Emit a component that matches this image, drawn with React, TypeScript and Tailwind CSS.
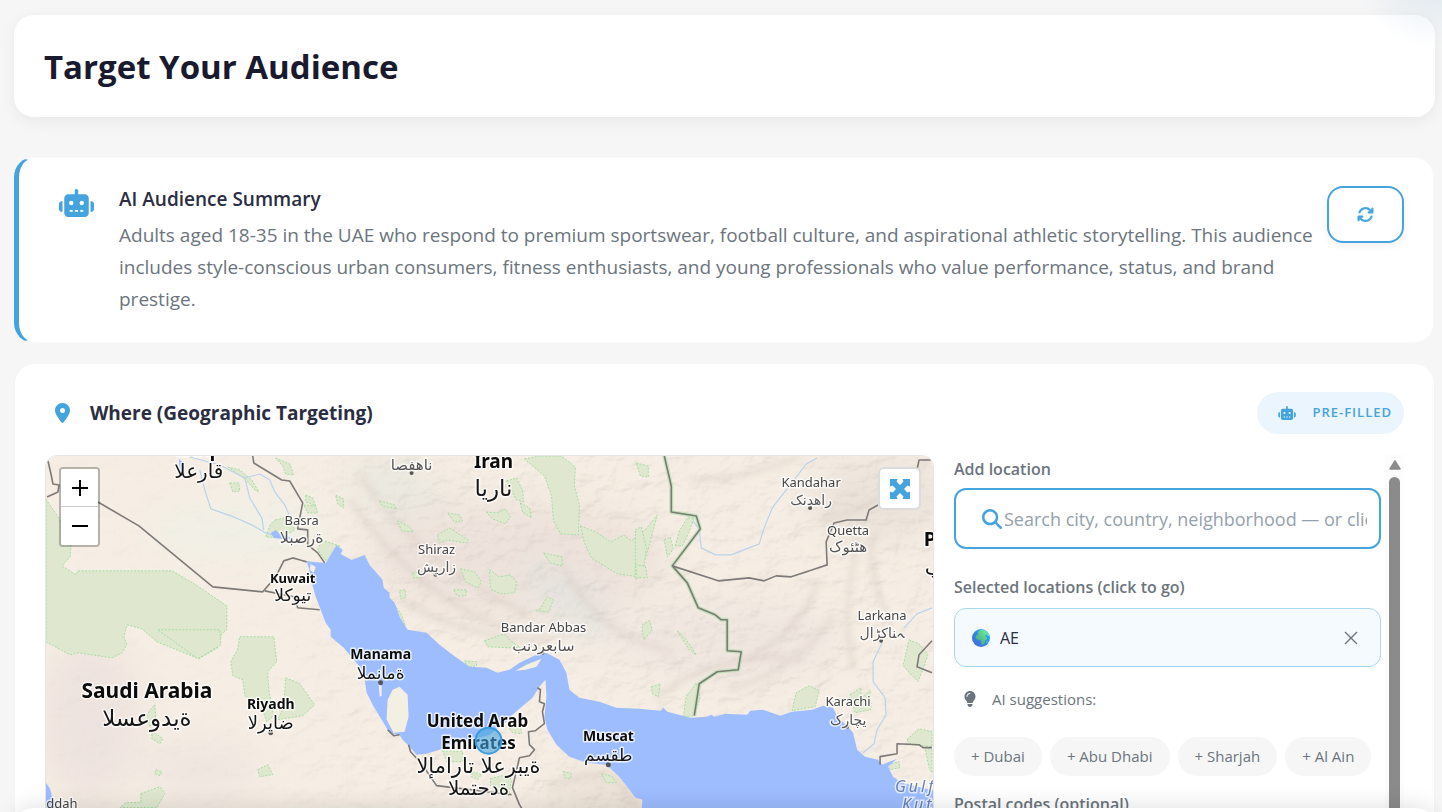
import React, { useState } from "react";
import {
  FaArrowsRotate,
  FaLightbulb,
  FaLocationDot,
  FaMagnifyingGlass,
  FaMaximize,
  FaRobot,
} from "react-icons/fa6";

const suggestions = ["Dubai", "Abu Dhabi", "Sharjah", "Al Ain"];

const parks = [
  "46,499 58,517 66,531 71,546 70,557 62,566 76,575 78,571 172,571 196,585 227,606 227,630 222,634 218,648 199,659 157,642 142,629 127,625 124,637 127,645 122,653 112,658 78,653 70,655 46,642",
  "240,637 274,637 277,662 268,672 269,690 274,716 267,722 261,705 245,696 243,680 233,676 231,662 238,649",
  "286,678 300,684 315,705 303,716 278,720 284,707",
  "525,459 540,456 562,456 576,467 575,486 580,505 579,535 561,534 554,520 552,495 545,476",
  "581,526 596,532 612,542 624,535 632,541 645,531 658,515 650,545 640,577 618,574 592,558 585,543",
  "461,569 475,572 482,582 478,588 466,582",
  "490,570 500,577 511,575 517,582 515,593 501,594 491,589",
  "438,535 450,528 456,532 469,540 467,543 448,540 440,543",
  "487,512 497,513 506,509 511,517 506,524 493,519",
  "448,513 460,515 463,521 455,522",
  "380,501 395,505 397,509 383,506",
  "398,521 410,527 414,532 402,531",
  "544,553 562,557 563,566 551,563",
  "540,610 548,597 554,600 549,612 537,611",
  "507,481 517,478 523,490 524,502 517,500",
  "521,503 530,508 532,518 523,512",
  "636,530 642,527 647,548 644,575 636,580",
  "636,565 646,566 648,578 638,578",
  "676,546 680,531 688,518 695,518 688,536 683,546",
  "665,540 671,537 674,549 668,557",
  "228,467 240,470 252,480 259,492 255,490 245,479",
  "276,458 290,464 294,475 286,474 283,466",
  "276,520 289,517 295,530 282,538 266,537 271,524",
  "304,505 316,506 318,513 308,513",
  "306,495 313,498 316,506 306,502",
  "322,540 340,546 335,560 325,560 318,550",
  "230,483 239,483 240,491 233,492",
  "336,495 344,499 344,508 338,504",
  "485,641 505,634 511,641 521,648 510,648 488,647",
  "465,661 477,662 477,666 468,667",
  "793,711 797,693 810,686 820,691 816,707",
  "684,717 687,697 697,683 701,698 695,716",
  "652,687 661,684 659,697 653,694",
  "910,640 920,644 929,655 919,682 904,666",
  "851,695 862,688 862,699 871,690 872,710 856,713",
  "908,740 920,729 933,732 933,747 912,745",
  "926,748 933,750 933,773 930,768",
  "889,765 900,762 901,768 891,770",
  "141,794 160,787 165,794 157,808 120,808 126,803 141,803",
  "258,770 268,765 273,775 260,777",
  "156,770 162,772 160,776 155,774",
  "150,710 155,705 156,719 150,727 147,718",
  "152,731 163,739 160,744 152,739",
  "158,630 220,630 221,645 198,659",
  "443,751 463,752 463,762 447,762",
  "473,772 482,775 478,780 472,777",
  "510,729 521,726 522,734 513,733",
  "491,779 507,775 512,780 509,796 491,786",
  "602,774 613,777 617,783 607,783",
  "564,772 572,774 571,779 565,778",
  "395,605 402,615 406,626 401,624",
  "400,591 406,590 406,598 401,599",
  "454,590 467,590 466,596 458,596",
  "413,573 422,572 421,578 414,578",
  "678,631 687,640 697,655 690,650",
  "643,625 650,621 653,630 645,640 643,632",
  "637,463 649,466 649,477 641,476",
];

const sea =
  "337,545 343,550 341,554 352,560 365,555 370,565 383,580 384,588 390,593 390,598 395,603 400,617 408,630 427,633 440,645 453,655 470,667 487,668 498,673 510,670 520,663 537,655 547,653 560,660 567,673 570,690 580,698 600,702 617,708 640,709 661,711 664,708 668,712 691,718 708,717 712,715 715,717 726,714 748,715 751,711 764,710 781,716 793,712 813,710 824,706 834,708 838,717 849,727 854,733 858,750 866,757 879,760 883,765 898,759 889,767 894,777 903,783 934,791 934,880 650,880 640,850 643,800 636,798 630,790 620,777 607,765 587,763 570,757 557,745 548,730 545,717 547,697 546,680 540,687 533,698 513,715 505,724 490,735 470,741 453,744 440,750 427,754 417,755 410,747 403,740 400,735 390,733 382,720 373,705 367,693 365,680 360,667 344,648 331,637 331,630 326,623 321,610 316,597 312,583 309,568 307,561 314,562 326,563";

const borders = [
  "48,461 51,474 53,484 59,485 58,492 47,497",
  "98,502 139,526 213,587 263,592 276,577 284,561 293,558 307,562",
  "265,591 294,597 298,608 320,610",
  "253,456 254,463 282,480 290,481 303,503 299,523 298,529 308,530 308,545 318,553 325,563",
  "665,456 672,486 672,512 697,516 701,529 673,566 688,583 699,608 716,615 722,620 728,620 728,651 742,652 739,670 718,672 700,684 695,716",
  "673,566 719,581 750,578 765,581 777,576 792,577 828,565 827,542 835,523 848,520 867,520 870,510 879,505",
  "918,470 920,460 933,460",
  "933,641 920,655 918,667 933,673",
  "881,765 881,757 898,754 898,744 920,745 924,748 933,748",
  "538,688 541,690 540,702 545,704 543,712 545,724 536,731 529,732 530,745 535,750 530,756 520,758 513,788 520,805 535,830",
  "409,745 411,752 422,764 437,786 512,795",
  "388,730 394,736 400,735",
];

const rivers = [
  "200,470 205,490 211,509 234,517 252,525 266,533 280,537",
  "190,457 220,465 245,478 250,498 262,518 264,530",
  "245,478 260,474 270,480 275,492 285,505 294,525",
  "694,521 700,530 702,548 716,555 732,555 760,544 765,528 773,508 795,480 807,464 818,458",
  "883,643 874,662 874,682 886,698 887,715 878,730 875,744 864,753",
  "933,608 918,614 905,628",
];

const ridges = [
  "M360 475q60 90 170 140",
  "M350 500q70 100 160 130",
  "M400 600q70 40 150 40",
  "M560 560q40 80 110 90",
  "M700 670q90-10 120-90",
  "M730 690q70-20 105-75",
  "M655 700q60-50 150-40",
  "M860 540q-20 70-5 130",
  "M880 530q-20 20 10 90",
  "M690 480q60 0 110-24",
  "M820 520q60-10 112-60",
  "M550 790q70-40 90 30",
];

// x, y, size, weight, latin label
const places: [number, number, number, number, string][] = [
  [494, 468, 19, 700, "Iran"],
  [302, 525, 13, 400, "Basra"],
  [437, 554, 13, 400, "Shiraz"],
  [293, 583, 13, 700, "Kuwait"],
  [544, 632, 13, 400, "Bandar Abbas"],
  [812, 487, 13, 400, "Kandahar"],
  [849, 535, 13, 400, "Quetta"],
  [883, 620, 13, 400, "Larkana"],
  [381, 659, 14, 700, "Manama"],
  [147, 698, 21, 700, "Saudi Arabia"],
  [271, 709, 14, 700, "Riyadh"],
  [478, 727, 17, 700, "United Arab"],
  [479, 749, 17, 700, "Emirates"],
  [609, 741, 14, 700, "Muscat"],
  [849, 706, 13, 400, "Karachi"],
  [62, 808, 13, 400, "ddah"],
  [196, 456, 19, 700, "Iraq"],
  [968, 546, 20, 700, "Pakistan"],
];

// native names, drawn left to right
const nativePlaces: [number, number, number, string][] = [
  [199, 478, 20, "العراق"],
  [412, 470, 15, "اصفهان"],
  [494, 496, 23, "ایران"],
  [302, 543, 16, "البصرة"],
  [437, 572, 14, "شیراز"],
  [293, 601, 17, "الكويت"],
  [544, 651, 15, "بندرعباس"],
  [812, 505, 14, "کندهار"],
  [849, 552, 15, "کوئٹه"],
  [883, 638, 14, "لاڑکانہ"],
  [381, 679, 17, "المنامة"],
  [147, 726, 23, "السعودية"],
  [271, 729, 18, "الرياض"],
  [479, 773, 21, "الإمارات العربية"],
  [479, 795, 20, "المتحدة"],
  [609, 761, 17, "مسقط"],
  [849, 725, 14, "کراچی"],
  [836, 454, 20, "افغانستان"],
  [963, 575, 21, "پاکستان"],
];

const GulfMap = () => (
  <svg
    viewBox="46 456 888 424"
    preserveAspectRatio="xMidYMin slice"
    className="block h-full w-full"
    role="img"
    aria-label="Map of the Gulf region"
  >
    <defs>
      <filter id="relief" x="0" y="0" width="100%" height="100%">
        <feTurbulence type="fractalNoise" baseFrequency="0.04 0.06" numOctaves="4" seed="8" />
        <feDiffuseLighting surfaceScale="5" diffuseConstant="1.15" lightingColor="#ffffff">
          <feDistantLight azimuth="225" elevation="60" />
        </feDiffuseLighting>
      </filter>
      <linearGradient id="reliefFade">
        <stop offset="0.25" stopColor="#444444" />
        <stop offset="0.42" stopColor="#ffffff" />
      </linearGradient>
      <mask id="reliefMask">
        <rect x="46" y="456" width="888" height="424" fill="url(#reliefFade)" />
      </mask>
      <filter id="soft" x="-50%" y="-50%" width="200%" height="200%">
        <feGaussianBlur stdDeviation="16" />
      </filter>
      <filter id="softLine">
        <feGaussianBlur stdDeviation="3" />
      </filter>
    </defs>
    <rect x="46" y="456" width="888" height="424" fill="#f6eee4" />
    <g filter="url(#soft)">
      <ellipse cx="240" cy="530" rx="90" ry="25" fill="#f0f0e6" />
      <ellipse cx="420" cy="520" rx="40" ry="90" fill="#ebe8df" transform="rotate(-45 420 520)" />
      <ellipse cx="520" cy="560" rx="150" ry="60" fill="#eee3dc" />
      <ellipse cx="570" cy="600" rx="60" ry="20" fill="#e4e2de" transform="rotate(40 570 600)" />
      <ellipse cx="730" cy="640" rx="110" ry="40" fill="#f0e6e0" />
      <ellipse cx="880" cy="500" rx="70" ry="40" fill="#ebe3da" />
      <ellipse cx="90" cy="720" rx="50" ry="80" fill="#eee3de" />
      <ellipse cx="200" cy="770" rx="60" ry="30" fill="#efe6e0" />
      <ellipse cx="620" cy="790" rx="70" ry="20" fill="#ebe0d5" />
    </g>
    <g mask="url(#reliefMask)" className="mix-blend-multiply">
      <rect x="46" y="456" width="888" height="424" filter="url(#relief)" opacity="0.17" />
    </g>
    <g fill="none" stroke="#d9cdc5" strokeWidth="5" opacity="0.5" filter="url(#softLine)">
      {ridges.map((d) => (
        <path key={d} d={d} />
      ))}
    </g>
    <g fill="#dfe8cf" stroke="#a3dca0" strokeWidth="1" strokeDasharray="2 1.5">
      {parks.map((p) => (
        <polygon key={p} points={p} />
      ))}
    </g>
    <g fill="none" stroke="#b9d3ec" strokeWidth="1.2" strokeLinejoin="round">
      {rivers.map((p) => (
        <polyline key={p} points={p} />
      ))}
    </g>
    <g fill="#9ebdff">
      <polygon points={sea} />
      <polygon points="46,783 50,789 52,797 58,808 46,830" />
      <polygon points="271,533 276,530 280,534 288,536 294,539 283,539 274,538" />
      <polygon points="179,459 184,463 185,475 180,472" />
    </g>
    <g fill="#f4efe3">
      <polygon points="400,687 408,695 409,717 405,732 394,733 387,720 388,700 393,690" />
      <polygon points="379,684 382,686 382,696 380,697" />
      <polygon points="516,671 527,665 542,659 537,667 526,670" />
      <polygon points="311,564 316,567 314,573 310,570" />
      <polygon points="864,755 876,752 878,759 868,757" />
    </g>
    <polyline
      points={borders[4]}
      fill="none"
      stroke="#b9e0b2"
      strokeWidth="4"
      opacity="0.8"
      strokeLinejoin="round"
    />
    <g fill="none" stroke="#7d7a78" strokeWidth="1.6" strokeLinejoin="round">
      {borders.map((p) => (
        <polyline key={p} points={p} />
      ))}
    </g>
    <g fill="#555555">
      <circle cx="412" cy="473" r="2" />
      <circle cx="436" cy="575" r="2" />
      <circle cx="381" cy="683" r="2.5" />
      <circle cx="271" cy="733" r="2.5" />
      <circle cx="543" cy="653" r="2" />
      <circle cx="609" cy="765" r="2.5" />
      <circle cx="848" cy="727" r="2" />
      <circle cx="811" cy="508" r="2" />
      <circle cx="882" cy="641" r="2" />
    </g>
    <g
      textAnchor="middle"
      stroke="#ffffff"
      strokeOpacity="0.75"
      strokeWidth="3"
      strokeLinejoin="round"
      className="font-['Noto_Sans',sans-serif] [paint-order:stroke]"
    >
      {places.map(([x, y, size, weight, name]) => (
        <text
          key={name}
          x={x}
          y={y}
          fontSize={size}
          fontWeight={weight}
          fill={weight === 700 ? "#0c0c0c" : "#444444"}
        >
          {name}
        </text>
      ))}
    </g>
    <g
      textAnchor="middle"
      stroke="#ffffff"
      strokeOpacity="0.75"
      strokeWidth="3"
      strokeLinejoin="round"
      className="font-['DejaVu_Sans',sans-serif] [direction:ltr] [paint-order:stroke]"
    >
      {nativePlaces.map(([x, y, size, name]) => (
        <text
          key={name}
          x={x}
          y={y}
          fontSize={size}
          fill={size > 16 ? "#161616" : "#555555"}
          className="[unicode-bidi:bidi-override]"
        >
          {name}
        </text>
      ))}
    </g>
    <g
      fontSize="16"
      fontStyle="italic"
      letterSpacing="3"
      fill="#6680b5"
      stroke="#ffffff"
      strokeOpacity="0.7"
      strokeWidth="3"
      className="font-['Noto_Sans',sans-serif] [paint-order:stroke]"
    >
      <text x="896" y="792">Gulf of</text>
      <text x="903" y="810">Kutch</text>
    </g>
    <circle
      cx="489"
      cy="741"
      r="13"
      fill="#45a3de"
      fillOpacity="0.6"
      stroke="#3b9bdc"
      strokeWidth="2"
    />
  </svg>
);

const Globe = () => (
  <svg viewBox="0 0 18 18" className="h-[18px] w-[18px]" aria-hidden="true">
    <defs>
      <linearGradient id="ocean" x1="0" y1="1" x2="1" y2="0">
        <stop offset="0" stopColor="#4a5fd8" />
        <stop offset="0.55" stopColor="#2f8fe8" />
        <stop offset="1" stopColor="#2bc4fb" />
      </linearGradient>
      <linearGradient id="land" x1="0" y1="1" x2="1" y2="0">
        <stop offset="0" stopColor="#3f9a78" />
        <stop offset="1" stopColor="#74f7a8" />
      </linearGradient>
    </defs>
    <circle cx="9" cy="9" r="9" fill="url(#ocean)" />
    <path
      d="M6.300 2.300C8 .5 12 .5 14 2c1.600 1.200 2.900 2.900 3.400 4.900l-1.500.1-1.400-1.300-1.300.2.200 1.300 1.500 1.500-.2 1.600-1.800 1.300-.1 2-1.500 2.100-1.500.2-.9-2.500-.2-2.200-1.900-.3-2.500-.9-.8-1.900 1.200-2 1.600-.8-.4-1.500z"
      fill="url(#land)"
    />
    <path d="M14.800 11.600l1 .3-.8 2-.7-.5z" fill="#58d99a" />
  </svg>
);

const App = () => {
  const [search, setSearch] = useState("");
  const [locations, setLocations] = useState(["AE"]);

  const addLocation = (name: string) => {
    if (!locations.includes(name)) setLocations([...locations, name]);
  };

  return (
    <div className="relative h-screen overflow-hidden bg-[#f6f6f6] pt-[15px] pr-[7px] pl-3.5 font-['Open_Sans',sans-serif] text-[#2b2d42]">
      <header className="rounded-[20px] bg-white px-[30px] pt-[29px] pb-[27px] shadow-[0_4px_16px_rgba(0,0,0,0.06)]">
        <h1 className="text-[33px] leading-[46px] font-bold text-[#1a1a2e]">
          Target Your Audience
        </h1>
      </header>
      <div className="pointer-events-none absolute -top-28 -right-[72px] h-40 w-40 rounded-full bg-[radial-gradient(closest-side,rgba(69,140,190,0.16),transparent)]" />

      <section className="mt-10 mr-px flex items-start rounded-[20px] border border-l-[5px] border-[#f9f9f9] border-l-[#45a3de] bg-white pt-7 pr-[29px] pb-[27px] pl-10">
        <FaRobot className="mt-[3px] h-7 w-[35px] shrink-0 text-[#45a3de]" />
        <div className="ml-[25px] min-w-0 flex-1">
          <h2 className="text-[19px] leading-[26px] font-semibold">
            AI Audience Summary
          </h2>
          <p className="mt-[7px] text-[19px] leading-8 text-[#6c757d]">
            Adults aged 18-35 in the UAE who respond to premium sportswear,
            football culture, and aspirational athletic storytelling. This
            audience includes style-conscious urban consumers, fitness
            enthusiasts, and young professionals who value performance, status,
            and brand prestige.
          </p>
        </div>
        <button
          aria-label="Refresh summary"
          className="ml-2.5 flex h-[57px] w-[77px] shrink-0 items-center justify-center rounded-2xl border-2 border-[#45a3de] bg-white text-[#45a3de] shadow-[0_3px_8px_rgba(0,0,0,0.06)]"
        >
          <FaArrowsRotate className="h-[17px] w-[17px]" />
        </button>
      </section>

      <section className="mt-[21px] mr-px ml-px rounded-[20px] bg-white px-[30px] pt-7 pb-8 shadow-[0_1px_3px_rgba(0,0,0,0.03)]">
        <div className="flex items-center">
          <FaLocationDot className="ml-[10px] h-5 w-[15px] text-[#45a3de]" />
          <h2 className="ml-5 text-[19px] leading-7 font-bold">
            Where (Geographic Targeting)
          </h2>
          <span className="ml-auto flex h-[42px] items-center gap-4 rounded-full bg-[#ebf5fd] pr-3 pl-[21px] text-[13px] font-semibold tracking-[1px] text-[#45a3de]">
            <FaRobot className="h-[14px] w-[18px]" />
            PRE-FILLED
          </span>
        </div>

        <div className="mt-[21px] grid grid-cols-[minmax(0,1fr)_450px] gap-5">
          <div className="relative h-[424px] overflow-hidden rounded-xl border border-[#e6e6e6]">
            <GulfMap />
            <div className="absolute top-[11px] left-[13px] flex flex-col overflow-hidden rounded-sm border-2 border-black/25 bg-clip-padding">
              <button
                aria-label="Zoom in"
                className="flex h-[38px] w-[37px] items-center justify-center border-b border-[#cccccc] bg-white text-black"
              >
                <svg viewBox="0 0 16 16" className="h-4 w-4" aria-hidden="true">
                  <path d="M0 8h16M8 0v16" stroke="currentColor" strokeWidth="2" />
                </svg>
              </button>
              <button
                aria-label="Zoom out"
                className="flex h-[38px] w-[37px] items-center justify-center bg-white text-black"
              >
                <svg viewBox="0 0 16 16" className="h-4 w-4" aria-hidden="true">
                  <path d="M0 8h16" stroke="currentColor" strokeWidth="2" />
                </svg>
              </button>
            </div>
            <button
              aria-label="Fullscreen"
              className="absolute top-[11px] right-3 flex h-[43px] w-[43px] items-center justify-center rounded-md border-2 border-[#dcdcdc] bg-white text-[#45a3de]"
            >
              {/* four arrows to the corners, cut out of a solid square */}
              <svg viewBox="0 0 20 20" className="h-5 w-5" fill="currentColor" aria-hidden="true">
                <path d="M0 0h7.500L6.500 2.500 10 6l3.500-3.500L12.500 0H20v7.500l-2.500-1L14 10l3.500 3.500 2.500-1V20h-7.500l1-2.500L10 14l-3.500 3.500 1 2.500H0v-7.500l2.500 1L6 10 2.500 6.500 0 7.500z" />
              </svg>
            </button>
          </div>

          <div className="flex h-[424px] overflow-hidden">
            <div className="min-w-0 flex-1 text-[15px]">
              <label
                htmlFor="location"
                className="block text-base leading-7 font-semibold text-[#6c757d]"
              >
                Add location
              </label>
              <div className="mt-[5px] flex h-[61px] items-center rounded-xl border-2 border-[#45a3de] bg-white pr-3 pl-[26px]">
                <FaMagnifyingGlass className="h-5 w-5 shrink-0 text-[#45a3de]" />
                <input
                  id="location"
                  type="text"
                  value={search}
                  onChange={(e) => setSearch(e.target.value)}
                  placeholder="Search city, country, neighborhood — or click the map"
                  className="ml-0.5 w-full min-w-0 bg-transparent text-lg outline-none placeholder:text-[#95a1ac]"
                />
              </div>
              <h3 className="mt-6 text-base leading-7 font-semibold text-[#6c757d]">
                Selected locations (click to go)
              </h3>
              <ul className="mt-[7px] flex flex-col gap-2">
                {locations.map((name) => (
                  <li
                    key={name}
                    className="flex h-[59px] items-center rounded-xl border border-[#a9d6f3] bg-[#f4faff] pr-[22px] pl-[17px] text-base"
                  >
                    <Globe />
                    <span className="ml-2.5">{name}</span>
                    <button
                      aria-label={"Remove " + name}
                      onClick={() =>
                        setLocations(locations.filter((l) => l !== name))
                      }
                      className="ml-auto text-[#6c757d]"
                    >
                      <svg viewBox="0 0 14 14" className="h-3.5 w-3.5" aria-hidden="true">
                        <path
                          d="M1 1l12 12M13 1L1 13"
                          stroke="currentColor"
                          strokeWidth="1.4"
                        />
                      </svg>
                    </button>
                  </li>
                ))}
              </ul>
              <p className="mt-[18px] flex items-center leading-7 text-[#6c757d]">
                <FaLightbulb className="ml-[10px] h-4 w-3" />
                <span className="ml-4">AI suggestions:</span>
              </p>
              <div className="mt-6 flex gap-2">
                {suggestions.map((name) => (
                  <button
                    key={name}
                    onClick={() => addLocation(name)}
                    className="h-[39px] rounded-full bg-[#f6f6f6] px-[17px] whitespace-nowrap text-[#6c757d]"
                  >
                    + {name}
                  </button>
                ))}
              </div>
              <label
                htmlFor="postal"
                className="mt-[14px] block text-base leading-7 font-semibold text-[#6c757d]"
              >
                Postal codes (optional)
              </label>
              <input
                id="postal"
                type="text"
                className="mt-1 h-[61px] w-full rounded-xl border-2 border-[#e6e6e6] px-4"
              />
            </div>
            <div className="ml-1 flex w-[19px] flex-col items-center bg-[#fcfcfc] pt-[5px]">
              <svg viewBox="0 0 12 10" className="h-2.5 w-3" aria-hidden="true">
                <path
                  d="M6 1L11 9H1z"
                  fill="#8b8b8b"
                  stroke="#8b8b8b"
                  strokeWidth="1.5"
                  strokeLinejoin="round"
                />
              </svg>
              <div className="mt-[7px] w-[11px] flex-1 rounded-full bg-[#8b8b8b]" />
            </div>
          </div>
        </div>
      </section>

      <div className="fixed right-1.5 -bottom-9 left-3.5 h-10 rounded-t-[20px] bg-white shadow-[0_-4px_20px_rgba(0,0,0,0.1)]" />
    </div>
  );
};

export default App;
